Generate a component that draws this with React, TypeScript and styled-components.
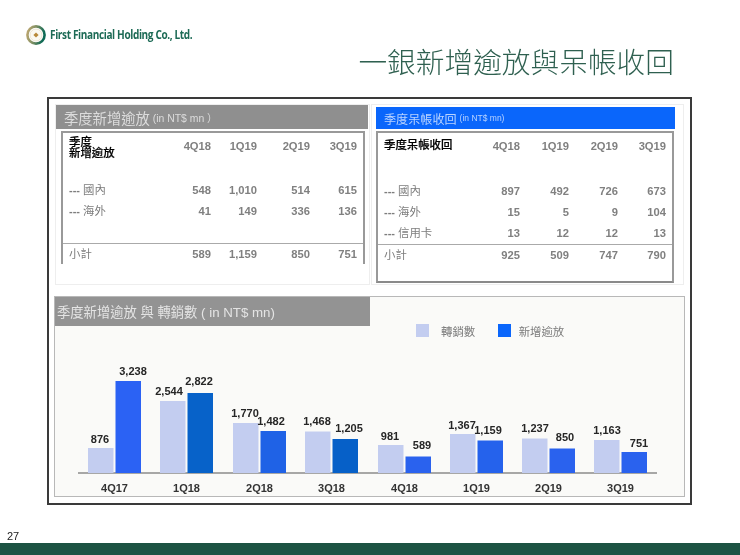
import React from "react";
import styled, { createGlobalStyle } from "styled-components";

const CJK = `"Liberation Sans", "Noto Sans CJK TC", sans-serif`;

const Global = createGlobalStyle`
  html, body { margin: 0; padding: 0; background: #fff; }
  body { font-family: ${CJK}; }
`;

const Page = styled.div`
  position: relative;
  width: 740px;
  height: 555px;
  overflow: hidden;
  display: flex;
  flex-direction: column;
  background: #fff;
  filter: blur(0.35px);
`;

const LogoRow = styled.div`
  display: flex;
  align-items: center;
  gap: 4px;
  height: 20px;
  margin: 25px 0 0 26px;
`;

const LogoText = styled.span`
  font-family: "Open Sans", sans-serif;
  font-weight: 700;
  font-size: 12.2px;
  letter-spacing: -0.45px;
  color: #1c6a55;
  white-space: nowrap;
  display: inline-block;
  transform: scaleX(0.825) translateY(-1px);
  transform-origin: left center;
`;

const TitleRow = styled.div`
  box-sizing: border-box;
  display: flex;
  justify-content: flex-end;
  align-items: center;
  height: 52px;
  padding: 0 66px 20px 0;
`;

const Title = styled.h1`
  margin: 0;
  font-family: "Noto Sans CJK TC", sans-serif;
  font-weight: 300;
  font-size: 28.7px;
  line-height: 32px;
  color: #2f6050;
  white-space: nowrap;
`;

const Frame = styled.div`
  box-sizing: border-box;
  width: 645px;
  height: 408px;
  margin-left: 47px;
  border: 2px solid #3a3a3a;
  padding-top: 5px;
  display: flex;
  flex-direction: column;
  gap: 11px;
  background: #fff;
`;

const TopRow = styled.div`
  display: flex;
  gap: 1px;
  padding-left: 6px;
`;

const SoftPanel = styled.section<{ $w: number }>`
  box-sizing: border-box;
  width: ${(p) => p.$w}px;
  height: 181px;
  border: 1px solid #eeeeee;
`;

const GrayHeader = styled.div`
  box-sizing: border-box;
  height: 24px;
  width: 312px;
  background: #8f8f8f;
  display: flex;
  align-items: center;
  padding-left: 8px;
  color: #dcdcdc;
  font-size: 14.3px;
  white-space: nowrap;
`;

const BlueHeader = styled.div`
  box-sizing: border-box;
  height: 22px;
  width: 299px;
  margin: 2px 0 0 4px;
  background: #0a66fb;
  display: flex;
  align-items: center;
  padding-left: 8px;
  color: #b9d3ff;
  font-size: 12.1px;
  white-space: nowrap;
`;

const Unit = styled.small<{ $size: number }>`
  font-size: ${(p) => p.$size}px;
  margin-left: 3px;
`;

const TableBox = styled.div<{ $w: number; $left: number; $closed?: boolean }>`
  box-sizing: border-box;
  width: ${(p) => p.$w}px;
  margin: 2px 0 0 ${(p) => p.$left}px;
  border: 2px solid #999;
  border-bottom: ${(p) => (p.$closed ? "2px solid #8a8a8a" : "none")};
  height: ${(p) => (p.$closed ? "152px" : "133px")};
`;

const Row = styled.div<{ $cols: string; $h: number; $rule?: boolean }>`
  display: grid;
  grid-template-columns: ${(p) => p.$cols};
  height: ${(p) => p.$h}px;
  align-items: center;
  padding-left: 6px;
  box-sizing: border-box;
  border-top: ${(p) => (p.$rule ? "1.5px solid #aaa" : "none")};
  color: #808080;
  font-size: 11.2px;
  font-weight: 700;
`;

const HeadRow = styled(Row)`
  align-items: start;
  padding-top: 6px;
`;

const Label = styled.div`
  font-weight: 400;
  font-size: 11.4px;
  line-height: 14px;
  color: #7d7d7d;
  white-space: nowrap;
`;

const Dash = styled.span`
  font-weight: 700;
  font-size: 11px;
  margin-right: 3px;
`;

const HeadLabel = styled.div<{ $drop: number }>`
  color: #000;
  font-weight: 500;
  font-size: 11.4px;
  line-height: 11px;
  margin-top: ${(p) => p.$drop}px;
  white-space: nowrap;
  -webkit-text-stroke: 0.2px #000;
`;

const Num = styled.div`
  text-align: right;
  white-space: nowrap;
  line-height: 14px;
`;

const ChartPanel = styled.section`
  box-sizing: border-box;
  width: 631px;
  height: 201px;
  margin-left: 5px;
  border: 1px solid #b8b8b8;
  background: #fafaf8;
`;

const ChartTop = styled.div`
  display: flex;
  align-items: flex-start;
  height: 40px;
`;

const ChartHeader = styled.div`
  box-sizing: border-box;
  width: 315px;
  height: 29px;
  background: #939393;
  display: flex;
  align-items: center;
  padding-left: 2px;
  color: #e4e4e4;
  font-size: 13.3px;
  white-space: nowrap;
`;

const Legend = styled.div`
  display: flex;
  align-items: center;
  margin: 27px 0 0 46px;
  height: 13px;
`;

const Swatch = styled.i<{ $c: string }>`
  width: 12.5px;
  height: 12.5px;
  background: ${(p) => p.$c};
  margin-right: 12.5px;
`;

const LegendText = styled.span<{ $mr?: number }>`
  font-size: 11.4px;
  color: #7a7a7a;
  margin-right: ${(p) => p.$mr ?? 0}px;
  margin-left: ${(p) => (p.$mr ? 0 : -4.5)}px;
  white-space: nowrap;
`;

const ChartSvg = styled.svg`
  display: block;
`;

const ValueText = styled.text`
  font-family: "Liberation Sans", sans-serif;
  font-size: 11px;
  font-weight: 700;
  fill: #262626;
  text-anchor: middle;
`;

const AxisText = styled(ValueText)`
  fill: #333;
`;

const PageNum = styled.div`
  margin: 24px 0 0 7px;
  height: 14px;
  font-size: 11px;
  line-height: 14px;
  color: #222;
  font-family: "Liberation Sans", sans-serif;
`;

const Band = styled.div`
  position: absolute;
  left: 0;
  right: 0;
  bottom: 0;
  height: 12.5px;
  background: #1d5343;
`;

type Q = {
  q: string; x: number; lTop: number; dTop: number; l: string; d: string;
  lx: number; ly: number; dx: number; dy: number; dc: string;
};

const bars: Q[] = [
  { q: "4Q17", x: 88, lTop: 448, dTop: 381, l: "876", d: "3,238", lx: 100, ly: 439, dx: 133, dy: 371, dc: "#2b62f4" },
  { q: "1Q18", x: 160, lTop: 401, dTop: 393, l: "2,544", d: "2,822", lx: 169, ly: 391, dx: 199, dy: 381, dc: "#0762c9" },
  { q: "2Q18", x: 233, lTop: 423, dTop: 431, l: "1,770", d: "1,482", lx: 245, ly: 413, dx: 271, dy: 421, dc: "#1f62e6" },
  { q: "3Q18", x: 305, lTop: 431.5, dTop: 439, l: "1,468", d: "1,205", lx: 317, ly: 421, dx: 349, dy: 428, dc: "#0660c8" },
  { q: "4Q18", x: 378, lTop: 445, dTop: 456.5, l: "981", d: "589", lx: 390, ly: 436, dx: 422, dy: 445, dc: "#2a62ee" },
  { q: "1Q19", x: 450, lTop: 434, dTop: 440.5, l: "1,367", d: "1,159", lx: 462, ly: 425, dx: 488, dy: 430, dc: "#2562ec" },
  { q: "2Q19", x: 522, lTop: 438.5, dTop: 448.5, l: "1,237", d: "850", lx: 535, ly: 428, dx: 565, dy: 437, dc: "#2a62ee" },
  { q: "3Q19", x: 594, lTop: 440, dTop: 452, l: "1,163", d: "751", lx: 607, ly: 430, dx: 639, dy: 443, dc: "#2a62ee" },
];

const BASE = 473;

const Logo = () => (
  <svg width="20" height="20" viewBox="0 0 20 20" aria-hidden="true">
    <defs>
      <linearGradient id="lg" x1="0" y1="0" x2="1" y2="0.25">
        <stop offset="0" stopColor="#c2a871" />
        <stop offset="0.5" stopColor="#7e8f63" />
        <stop offset="1" stopColor="#0f6a55" />
      </linearGradient>
    </defs>
    <circle cx="10" cy="10" r="8.6" fill="none" stroke="url(#lg)" strokeWidth="2.6" />
    <circle cx="10" cy="10" r="6" fill="#fbf9f2" stroke="#dccfae" strokeWidth="0.5" />
    <path d="M10 7.4 L12.6 10 L10 12.6 L7.4 10 Z" fill="#b8893a" />
  </svg>
);

const leftCols = "95px 47px 46px 53px 47px";
const rightCols = "88px 48px 49px 49px 48px";

const Cells = ({ v }: { v: string[] }) => (
  <>
    {v.map((n, i) => (
      <Num key={i}>{n}</Num>
    ))}
  </>
);

export default function App() {
  return (
    <Page>
      <Global />
      <LogoRow>
        <Logo />
        <LogoText>First Financial Holding Co., Ltd.</LogoText>
      </LogoRow>
      <TitleRow>
        <Title>一銀新增逾放與呆帳收回</Title>
      </TitleRow>
      <Frame>
        <TopRow>
          <SoftPanel $w={315}>
            <GrayHeader>
              季度新增逾放<Unit $size={10.4}>(in NT$ mn ）</Unit>
            </GrayHeader>
            <TableBox $w={304} $left={5}>
              <HeadRow $cols={leftCols} $h={46}>
                <HeadLabel $drop={-2}>季度<br />新增逾放</HeadLabel>
                <Cells v={["4Q18", "1Q19", "2Q19", "3Q19"]} />
              </HeadRow>
              <Row $cols={leftCols} $h={21}>
                <Label><Dash>---</Dash>國內</Label>
                <Cells v={["548", "1,010", "514", "615"]} />
              </Row>
              <Row $cols={leftCols} $h={21}>
                <Label><Dash>---</Dash>海外</Label>
                <Cells v={["41", "149", "336", "136"]} />
              </Row>
              <Row $cols={leftCols} $h={22} />
              <Row $cols={leftCols} $h={21} $rule>
                <Label>小計</Label>
                <Cells v={["589", "1,159", "850", "751"]} />
              </Row>
            </TableBox>
          </SoftPanel>
          <SoftPanel $w={313}>
            <BlueHeader>
              季度呆帳收回<Unit $size={8.5}>(in NT$ mn)</Unit>
            </BlueHeader>
            <TableBox $w={298} $left={4} $closed>
              <HeadRow $cols={rightCols} $h={47}>
                <HeadLabel $drop={1}>季度呆帳收回</HeadLabel>
                <Cells v={["4Q18", "1Q19", "2Q19", "3Q19"]} />
              </HeadRow>
              <Row $cols={rightCols} $h={21}>
                <Label><Dash>---</Dash>國內</Label>
                <Cells v={["897", "492", "726", "673"]} />
              </Row>
              <Row $cols={rightCols} $h={21}>
                <Label><Dash>---</Dash>海外</Label>
                <Cells v={["15", "5", "9", "104"]} />
              </Row>
              <Row $cols={rightCols} $h={22}>
                <Label><Dash>---</Dash>信用卡</Label>
                <Cells v={["13", "12", "12", "13"]} />
              </Row>
              <Row $cols={rightCols} $h={21} $rule>
                <Label>小計</Label>
                <Cells v={["925", "509", "747", "790"]} />
              </Row>
            </TableBox>
          </SoftPanel>
        </TopRow>
        <ChartPanel>
          <ChartTop>
            <ChartHeader>季度新增逾放 與 轉銷數 ( in NT$ mn)</ChartHeader>
            <Legend>
              <Swatch $c="#c3cdf0" />
              <LegendText $mr={23}>轉銷數</LegendText>
              <Swatch $c="#0a66fb" />
              <LegendText>新增逾放</LegendText>
            </Legend>
          </ChartTop>
          <ChartSvg width="629" height="159" viewBox="55 337 629 159">
            <line x1="78" x2="657" y1={BASE} y2={BASE} stroke="#555" strokeWidth="1" />
            {bars.map((b) => (
              <g key={b.q}>
                <rect x={b.x} y={b.lTop} width="25.5" height={BASE - b.lTop} fill="#c3cdf0" />
                <rect x={b.x + 27.5} y={b.dTop} width="25.5" height={BASE - b.dTop} fill={b.dc} />
                <ValueText x={b.lx} y={b.ly + 4}>{b.l}</ValueText>
                <ValueText x={b.dx} y={b.dy + 4}>{b.d}</ValueText>
                <AxisText x={b.x + 26.5} y={492}>{b.q}</AxisText>
              </g>
            ))}
          </ChartSvg>
        </ChartPanel>
      </Frame>
      <PageNum>27</PageNum>
      <Band />
    </Page>
  );
}
